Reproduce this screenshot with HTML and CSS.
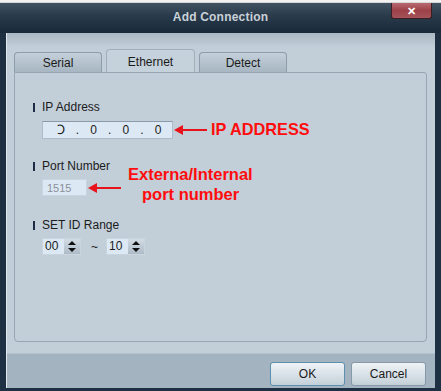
FILE: index.html
```html
<!DOCTYPE html>
<html lang="en">
<head>
    <meta charset="UTF-8">
    <title>Add Connection</title>
    <link rel="stylesheet" href="styles.css">
</head>
<body>
    <div class="backdrop"></div>
    <div class="window">
        <div class="titlebar">
            <span class="title">Add Connection</span>
            <button class="close">&#x2715;</button>
        </div>
        <div class="client">
            <div class="tabs">
                <div class="tab">Serial</div>
                <div class="tab active">Ethernet</div>
                <div class="tab">Detect</div>
            </div>
            <div class="panel">
                <div class="field">
                    <div class="label">IP Address</div>
                    <div class="row">
                        <div class="input ip"><span class="caret">Ↄ</span><span>.</span><span>0</span><span>.</span><span>0</span><span>.</span><span>0</span></div>
                        <div class="arrow"></div>
                        <div class="note">IP ADDRESS</div>
                    </div>
                </div>
                <div class="field">
                    <div class="label">Port Number</div>
                    <div class="row">
                        <div class="input port">1515</div>
                        <div class="arrow"></div>
                        <div class="note note-two">Externa/Internal<br><span class="indent">port number</span></div>
                    </div>
                </div>
                <div class="field">
                    <div class="label">SET ID Range</div>
                    <div class="row">
                        <div class="spin"><span class="spin-val">00</span><span class="spin-btn"></span></div>
                        <span class="tilde">~</span>
                        <div class="spin"><span class="spin-val">10</span><span class="spin-btn"></span></div>
                    </div>
                </div>
            </div>
            <div class="footer">
                <button class="btn ok">OK</button>
                <button class="btn">Cancel</button>
            </div>
        </div>
    </div>
</body>
</html>
```

FILE: styles.css
```css
body {
    margin: 0;
    background: #f4f4f4;
    font-family: 'Liberation Sans', Arial, sans-serif;
    font-size: 12px;
    color: #1b1b1b;
    width: 441px;
    height: 391px;
    overflow: hidden;
}

.backdrop {
    height: 3px;
    background: #f2f2f2;
    border-bottom: 1px solid #d6d6d6;
    box-sizing: border-box;
}

.window {
    height: 388px;
    background: linear-gradient(to bottom, #37495a, #1d2f41 30px, #1e3043);
    padding: 0 6px 3px 6px;
    box-sizing: border-box;
    display: flex;
    flex-direction: column;
    border-radius: 4px 4px 0 0;
}

.titlebar {
    height: 30px;
    position: relative;
    display: flex;
    align-items: center;
    justify-content: center;
    background: linear-gradient(to bottom, #415262, #2a3b4b 12px, #18293a 30px);
    margin: 0 -6px;
}

.title {
    color: #c9d1d8;
    font-weight: bold;
    font-size: 12px;
    letter-spacing: 0.2px;
    margin-top: -3px;
}

.close {
    position: absolute;
    top: 0;
    right: 9px;
    width: 41px;
    height: 16px;
    border: 1px solid #3a1e22;
    border-top: none;
    border-radius: 0 0 3px 3px;
    background: linear-gradient(to bottom, #b86a70, #9d4148 50%, #a5525a);
    color: #fff;
    font-size: 11px;
    font-weight: bold;
    line-height: 14px;
    padding: 0;
}

.client {
    flex: 1;
    background: linear-gradient(to bottom, #a9b8c4, #c2ced8 14px);
    border-left: 1px solid #e2e8ec;
    display: flex;
    flex-direction: column;
}

.tabs {
    display: flex;
    align-items: flex-end;
    gap: 4px;
    padding: 16px 0 0 7px;
    height: 23px;
}

.tab {
    width: 88px;
    height: 20px;
    box-sizing: border-box;
    border: 1px solid #8d9dab;
    border-bottom: none;
    border-radius: 4px 4px 0 0;
    background: linear-gradient(to bottom, #c4d0da, #a7b6c2);
    text-align: center;
    line-height: 20px;
    color: #1a1a1a;
}

.tab.active {
    width: 89px;
    height: 23px;
    line-height: 24px;
    background: #c5d1db;
    border-color: #a1afbb;
}

.panel {
    margin: 0 8px 0 7px;
    height: 270px;
    box-sizing: border-box;
    border: 1px solid #98a6b2;
    border-radius: 0 3px 4px 4px;
    padding: 27px 0 0 18px;
}

.field {
    height: 59px;
}

.label {
    display: flex;
    align-items: center;
    height: 14px;
}

.label::before {
    content: "";
    width: 2px;
    height: 9px;
    background: #1c2c47;
    margin-right: 7px;
}

.row {
    display: flex;
    align-items: center;
    margin: 6px 0 0 9px;
    position: relative;
}

.input {
    height: 18px;
    box-sizing: border-box;
    background: #dce9f5;
    border: 1px solid #aebccb;
    border-top-color: #8b9aaa;
    color: #222;
    line-height: 16px;
}

.input.ip {
    width: 131px;
    display: flex;
    justify-content: space-around;
    padding: 0 5px 0 8px;
    font-size: 12px;
}

.caret {
    font-size: 13px;
}

.input.port {
    width: 45px;
    height: 17px;
    color: #8a8f95;
    padding-left: 4px;
    font-size: 11px;
    border: 1px solid #c9d5df;
}

.arrow {
    width: 30px;
    height: 2px;
    background: #e8121a;
    position: relative;
    margin-left: 4px;
}

.arrow::before {
    content: "";
    position: absolute;
    left: -3px;
    top: -4px;
    border-right: 9px solid #e8121a;
    border-top: 5px solid transparent;
    border-bottom: 5px solid transparent;
}

.note {
    color: #ff0d0d;
    font-weight: bold;
    font-size: 16.3px;
    margin-left: 4px;
}

.note-two {
    position: absolute;
    left: 82px;
    top: -15px;
    font-size: 16.5px;
    line-height: 20px;
}

.indent {
    margin-left: 14px;
}

.spin {
    display: flex;
    height: 17px;
    width: 39px;
    box-sizing: border-box;
    border: 1px solid #c9d5df;
    background: #dce9f5;
}

.spin-val {
    flex: 1;
    padding-left: 2px;
    line-height: 15px;
    font-size: 12px;
}

.spin-btn {
    width: 16px;
    background: linear-gradient(to bottom, #d2dbe3, #aebbc7);
    position: relative;
}

.spin-btn::before,
.spin-btn::after {
    content: "";
    position: absolute;
    left: 4px;
    border-left: 4px solid transparent;
    border-right: 4px solid transparent;
}

.spin-btn::before {
    top: 2px;
    border-bottom: 4px solid #111;
}

.spin-btn::after {
    bottom: 2px;
    border-top: 4px solid #111;
}

.tilde {
    margin: 0 8px 0 10px;
    font-size: 12px;
}

.footer {
    margin-top: 11px;
    flex: 1;
    background: #a3b3c0;
    border-top: 1px solid #b3c1cc;
    display: flex;
    justify-content: flex-end;
    align-items: flex-start;
    gap: 6px;
    padding: 8px 9px 0 0;
}

.btn {
    width: 75px;
    height: 24px;
    border: 1px solid #8599a9;
    border-radius: 3px;
    background: linear-gradient(to bottom, #eef3f6, #d9e2e8 50%, #c4d0d8);
    font-family: 'Liberation Sans', Arial, sans-serif;
    font-size: 12px;
    color: #1a1a1a;
    padding: 0;
}

.btn.ok {
    border-color: #5d8fae;
}
```
